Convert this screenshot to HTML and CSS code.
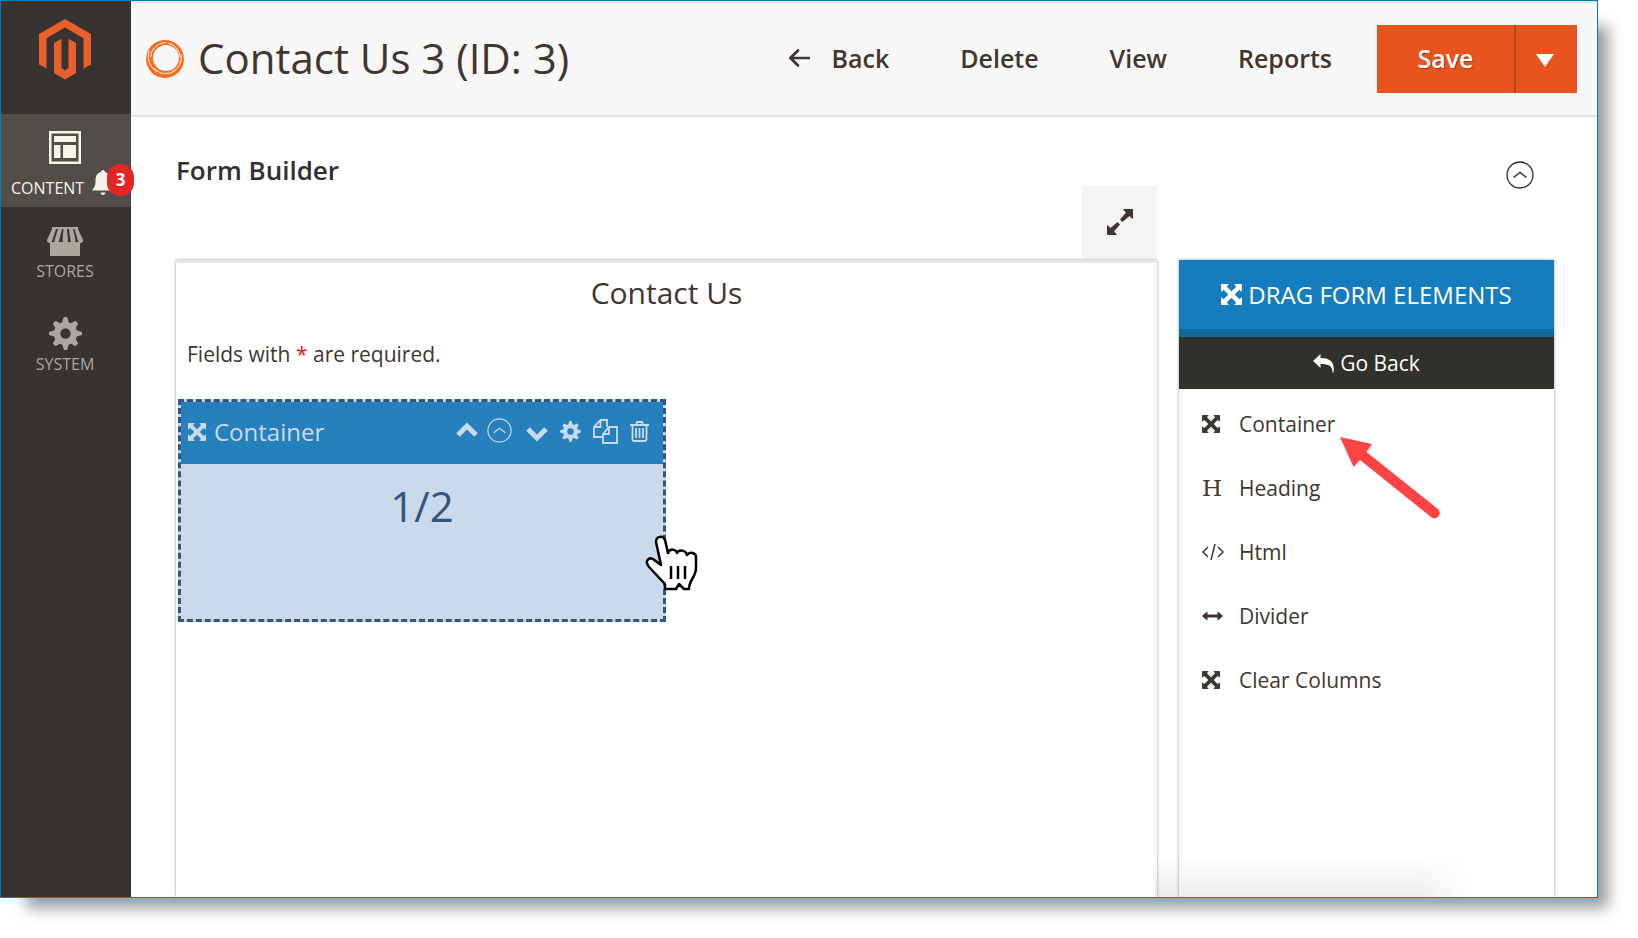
FILE: index.html
```html
<!DOCTYPE html>
<html lang="en">
<head>
<meta charset="utf-8">
<title>Contact Us 3 (ID: 3)</title>
<link rel="stylesheet" href="styles.css">
</head>
<body>
<svg class="sprite" aria-hidden="true">
  <symbol id="expand-all" viewBox="0 0 20 20"><path d="M0 1Q0 0 1 0H7.500L5.500 2.500 10 7 14.500 2.500 12.500 0H19Q20 0 20 1V7.500L17.500 5.500 13 10 17.500 14.500 20 12.500V19Q20 20 19 20H12.500L14.500 17.500 10 13 5.500 17.500 7.500 20H1Q0 20 0 19V12.500L2.500 14.500 7 10 2.500 5.500 0 7.500Z"/></symbol>
  <symbol id="gear" viewBox="0 0 32 32"><path fill-rule="evenodd" d="M13.300 3 14.500 0H17.500L18.700 3 19 5 21.500 6 25.600 3.700 28.300 6.400 26 10.500 27 13 32 14.500V17.500L27 19 26 21.500 28.300 25.600 25.600 28.300 21.500 26 19 27 17.500 32H14.500L13 27 10.500 26 6.400 28.300 3.700 25.600 6 21.500 5 19 0 17.500V14.500L5 13 6 10.500 3.700 6.400 6.400 3.700 10.500 6 13 5ZM16 11A5 5 0 1 0 16 21A5 5 0 1 0 16 11Z"/></symbol>
  <symbol id="circle-up" viewBox="0 0 28 28"><circle cx="14" cy="14" r="13" fill="none" stroke="currentColor" stroke-width="1.300"/><path d="M7.500 16.500 14 11.500 20.500 16.500" fill="none" stroke="currentColor" stroke-width="1.500"/></symbol>
</svg>
<div class="window">
  <nav class="sidebar">
    <a class="logo" href="#" aria-label="Home"><svg width="52" height="61" viewBox="0 0 52 61"><path d="M26 0 52 15V45.500L44.500 49.500V19.300L26 8.600 7.500 19.300V49.500L0 45.500V15Z"/><path d="M15 24 22.500 19.800V49L26 51.500 29.500 49V19.800L37 24V54L26 60.500 15 54Z"/></svg></a>
    <a class="nav-item active" href="#">
      <svg width="32" height="33" viewBox="0 0 32 33"><path fill-rule="evenodd" d="M0 0H32V33H0ZM2.500 2.500V30.500H29.500V2.500Z"/><path d="M5 5H27V11H5ZM5 14H11.500V27H5ZM14 14H27V27H14Z"/></svg>
      <span class="nav-label">CONTENT</span>
      <svg class="bell" width="22" height="26" viewBox="0 0 22 26"><path d="M11 0C12.500 0 13 1 13 2 17 3 18.500 6 18.500 11 18.500 16 19.500 17 22 20.500H0C2.500 17 3.500 16 3.500 11 3.500 6 5 3 9 2 9 1 9.500 0 11 0ZM8.500 22.500H13.500Q13 25 11 25 9 25 8.500 22.500Z"/></svg>
      <span class="badge">3</span>
    </a>
    <a class="nav-item" href="#">
      <svg width="36" height="33" viewBox="0 -3 36 33"><path d="M5 0H31V2H5ZM3 15H33V29H3ZM5 2H9L5 14Q4 16 2.500 16 0 16 0 13ZM11 2H15L12 14Q11 16 9.500 16 7 16 7.500 13ZM16.500 2H20L21 13Q21 16 18.500 16 16 16 15.500 13ZM22 2H26L28.500 13Q28 16 26 16 24 16 23.500 14ZM27.500 2H31L36 13Q36 16 33.500 16 31.500 16 31 14Z"/></svg>
      <span class="nav-label">STORES</span>
    </a>
    <a class="nav-item" href="#">
      <svg width="33" height="33"><use href="#gear"/></svg>
      <span class="nav-label">SYSTEM</span>
    </a>
  </nav>
  <main class="main">
    <header class="topbar">
      <svg class="ring" width="38" height="38" viewBox="0 0 38 38"><path fill-rule="evenodd" d="M19 0A19 19 0 1 0 19 38A19 19 0 1 0 19 0ZM20 5A13 13 0 1 1 20 31A13 13 0 1 1 20 5Z"/><path class="gap" d="M20 2.500A15.500 15.500 0 0 0 4.500 17M3 11A17 17 0 0 0 11 31.500M8 28A15.500 15.500 0 0 0 30 30M26 32A16 16 0 0 0 35 14M22 3A15 15 0 0 1 34 17"/></svg>
      <h1>Contact Us 3 (ID: 3)</h1>
      <div class="actions">
        <button class="action back"><svg width="21" height="18" viewBox="0 0 21 18"><path d="M20 9H2M9 1.500 1.500 9 9 16.500" fill="none" stroke="currentColor" stroke-width="2.700" stroke-linecap="round"/></svg>Back</button>
        <button class="action">Delete</button>
        <button class="action">View</button>
        <button class="action">Reports</button>
      </div>
      <div class="split">
        <button class="save">Save</button>
        <button class="more" aria-label="More save options"><svg width="18" height="13" viewBox="0 0 18 13"><path d="M0 0H18L9 13Z"/></svg></button>
      </div>
    </header>
    <section class="builder">
      <div class="section-head">
        <h2>Form Builder</h2>
        <button class="collapse" aria-label="Collapse section"><svg width="28" height="28"><use href="#circle-up"/></svg></button>
      </div>
      <div class="workspace">
        <div class="editor">
          <button class="fullscreen" aria-label="Full screen"><svg width="26" height="26" viewBox="0 0 26 26"><path d="M16.500 0H25Q26 0 26 1V9.500H25L22.500 7 15.500 13 13 10.500 19 3.500 16.500 1ZM9.500 26H1Q0 26 0 25V16.500H1L3.500 19 10.500 13 13 15.500 7 22.500 9.500 25Z"/></svg></button>
          <div class="canvas">
            <h3>Contact Us</h3>
            <p>Fields with <span class="required">*</span> are required.</p>
            <div class="block">
              <div class="block-head">
                <svg width="18" height="18"><use href="#expand-all"/></svg>
                <span class="block-name">Container</span>
                <div class="tools">
                  <button aria-label="Move up"><svg width="22" height="26" viewBox="0 0 22 26"><path d="M2 16 11 7 20 16" fill="none" stroke="currentColor" stroke-width="5"/></svg></button>
                  <button class="toggle" aria-label="Collapse"><svg width="25" height="28" viewBox="0 0 25 28"><use href="#circle-up" width="25" height="25"/></svg></button>
                  <button aria-label="Move down"><svg width="22" height="26" viewBox="0 0 22 26"><path d="M2 10 11 19 20 10" fill="none" stroke="currentColor" stroke-width="5"/></svg></button>
                  <button aria-label="Settings"><svg width="21" height="21"><use href="#gear"/></svg></button>
                  <button aria-label="Duplicate"><svg width="25" height="25" viewBox="0 0 25 25"><path d="M9 18H1V8L7.500 1H14V8M1 8H7.500V1M10 15 16 8H24V24H10ZM10 15H16V8" fill="none" stroke="currentColor" stroke-width="1.800"/></svg></button>
                  <button aria-label="Remove"><svg width="19" height="21" viewBox="0 0 19 21"><path d="M0 4H19M6 4 7 1H12L13 4M2.500 4V18.500Q2.500 20 4 20H15Q16.500 20 16.500 18.500V4M6 7V17M9.500 7V17M13 7V17" fill="none" stroke="currentColor" stroke-width="1.800"/></svg></button>
                </div>
              </div>
              <div class="block-body">1/2</div>
              <svg class="hand" width="54" height="58" viewBox="0 0 54 58"><path d="M11 7C11 1 18 0 20 5L23 18C25 13 31 14 32 18 34 14 41 15 42 20 45 16 51 18 51 22V33C51 42 44 45 44 54H39L34 49 31 54H20V49L4 32C-1 26 4 22 8 24L16 30Z" fill="#fff" stroke="#000" stroke-width="2.500" stroke-linejoin="round"/><path d="M26 31V44M33 31V44M40 31V44" stroke="#000" stroke-width="2.500"/></svg>
            </div>
          </div>
        </div>
        <aside class="palette">
          <h3><svg width="21" height="21"><use href="#expand-all"/></svg>DRAG FORM ELEMENTS</h3>
          <button class="go-back"><svg width="21" height="19" viewBox="0 0 21 19"><path d="M0 7 7.500 0V4C17 4 22 8 20.500 18.500H19.500C19.500 12 16 10 7.500 10V14Z"/></svg>Go Back</button>
          <ul>
            <li><svg width="18" height="18"><use href="#expand-all"/></svg>Container
              <svg class="pointer" width="100" height="82" viewBox="0 0 100 82"><path d="M0 0 32 7 26.500 15 98 72A5 5 0 0 1 91 80L20 23 13.500 30Z"/></svg></li>
            <li><b class="h-icon">H</b>Heading</li>
            <li><svg width="22" height="16" viewBox="0 0 22 16"><path d="M6 3 1 8 6 13M16 3 21 8 16 13M13 0 9 16" fill="none" stroke="currentColor" stroke-width="1.500"/></svg>Html</li>
            <li><svg width="21" height="8" viewBox="0 0 21 8"><path d="M0 4 4.500 0H5.500V2.500H15.500V0H16.500L21 4 16.500 8H15.500V5.500H5.500V8H4.500Z"/></svg>Divider</li>
            <li><svg width="18" height="18"><use href="#expand-all"/></svg>Clear Columns</li>
          </ul>
          <div class="fade"></div>
        </aside>
      </div>
    </section>
  </main>
</div>
</body>
</html>
```
FILE: styles.css
```css
* { box-sizing: border-box; }
body {
  margin: 0;
  height: 100vh;
  padding: 0 40px 40px 0;
  background: #fff;
  color: #41362f;
  font-family: "Open Sans", "Noto Sans", sans-serif;
  overflow: hidden;
}
button { border: 0; padding: 0; background: none; color: inherit; font: inherit; cursor: pointer; }
h1, h2, h3, p, ul { margin: 0; padding: 0; font-weight: 400; }
svg { display: block; flex: none; fill: currentColor; }
.sprite { position: absolute; width: 0; height: 0; }

.window {
  display: flex;
  height: 100%;
  border: 1px solid #007bc0;
  box-shadow: 18px 18px 14px -8px rgba(0, 0, 0, .4);
}
.sidebar { flex: 0 0 130px; background: #373330; color: #aaa6a0; }
.logo { display: flex; justify-content: center; height: 113px; padding: 18px 2px 0 0; color: #eb5f2d; }
.nav-item {
  position: relative;
  display: flex;
  flex-direction: column;
  align-items: center;
  gap: 4px;
  height: 93px;
  padding: 17px 2px 0 0;
  color: inherit;
  font-size: 16px;
  line-height: 20px;
  text-decoration: none;
}
.nav-item.active { gap: 14px; background: #524d49; color: #f7f3eb; }
.nav-item.active .nav-label { align-self: flex-start; margin-left: 10px; }
.nav-item .bell { position: absolute; top: 56px; left: 91px; }
.nav-item .badge {
  position: absolute;
  top: 50px;
  left: 106px;
  z-index: 1;
  width: 27px;
  height: 32px;
  border-radius: 13px;
  background: #e22626;
  color: #fff;
  font-size: 17px;
  font-weight: 700;
  line-height: 32px;
  text-align: center;
}

.main { flex: 1; display: flex; flex-direction: column; min-width: 0; overflow: hidden; }
.topbar {
  flex: none;
  display: flex;
  align-items: center;
  height: 116px;
  padding: 0 20px 0 15px;
  border: solid #e3e3e3;
  border-width: 2px 0;
  background: #f8f8f8;
}
.ring { color: #ff6c21; }
.ring .gap { fill: none; stroke: #f8f8f8; stroke-width: 1; }
h1 { margin-left: 14px; padding-bottom: 2px; font-size: 42px; line-height: 56px; white-space: nowrap; }
.actions { display: flex; gap: 71px; margin-left: auto; padding-bottom: 2px; }
.action { display: flex; align-items: center; font-size: 25px; font-weight: 600; }
.back { gap: 21px; }
.split { display: flex; height: 68px; margin-left: 45px; background: #e9531d; color: #fff; }
.save { width: 139px; padding-bottom: 2px; border-right: 2px solid #b84216; font-size: 25px; font-weight: 600; text-shadow: 1px 1px 0 rgba(0, 0, 0, .3); }
.more { display: flex; align-items: center; justify-content: center; width: 61px; padding: 3px 4px 0 0; }

.builder { flex: 1; display: flex; flex-direction: column; min-height: 0; padding: 34px 43px 0 45px; }
.section-head { display: flex; justify-content: space-between; height: 35px; padding-right: 20px; color: #303030; }
h2 { font-size: 26px; font-weight: 600; line-height: 38px; }
.collapse { align-self: flex-end; margin-bottom: -3px; }
.workspace { flex: 1; display: flex; gap: 22px; min-height: 0; }
.editor { flex: 1; display: flex; flex-direction: column; }
.fullscreen { display: flex; align-items: center; justify-content: center; align-self: flex-end; flex: none; width: 75px; height: 72px; background: #f5f5f5; }
.canvas { flex: 1; margin-top: 2px; border-top: 3px solid #e5e5e5; box-shadow: 0 0 3px rgba(0, 0, 0, .4); }
.canvas h3 { padding-top: 10px; font-size: 30px; line-height: 40px; text-align: center; }
.canvas p { padding: 26px 11px 30px; font-size: 21px; line-height: 30px; }
.required { color: #ff1020; }
.block { position: relative; display: flex; flex-direction: column; width: 488px; height: 223px; margin-left: 2px; border: 3px dashed #33557f; background: #cbdaea; }
.block-head { display: flex; align-items: center; height: 62px; padding: 0 14px 3px 7px; background: #2680bc; color: #cbdaea; }
.block-name { margin-left: 8px; font-size: 24px; }
.tools { display: flex; align-items: center; gap: 12px; margin-left: auto; }
.toggle { margin: 0 2px 0 -3px; }
.block-body { padding-top: 14px; color: #33557f; font-size: 42px; line-height: 56px; text-align: center; }
.hand { position: absolute; top: 133px; left: 464px; }

.palette { position: relative; flex: 0 0 375px; margin-top: 74px; box-shadow: 0 0 3px rgba(0, 0, 0, .4); }
.palette h3 { display: flex; align-items: center; justify-content: center; gap: 6px; height: 77px; border-bottom: 8px solid #0d6898; background: #157dbd; color: #fff; font-size: 24px; }
.go-back { display: flex; align-items: center; justify-content: center; gap: 6px; width: 100%; height: 52px; background: #32302b; color: #fff; font-size: 21px; }
.palette ul { padding: 3px 23px; list-style: none; }
.palette li { position: relative; display: grid; grid-template-columns: 22px 1fr; align-items: center; gap: 15px; height: 64px; font-size: 21px; }
.h-icon { font: 400 23px "DejaVu Serif", serif; }
.pointer { position: absolute; top: 45px; left: 138px; color: #ff4444; }
.fade {
  position: absolute;
  right: 85px;
  bottom: 0;
  left: -24px;
  height: 42px;
  background: linear-gradient(to top, rgba(0, 0, 0, .07), transparent);
  mask-image: linear-gradient(to left, transparent, #000 50px);
}
```
